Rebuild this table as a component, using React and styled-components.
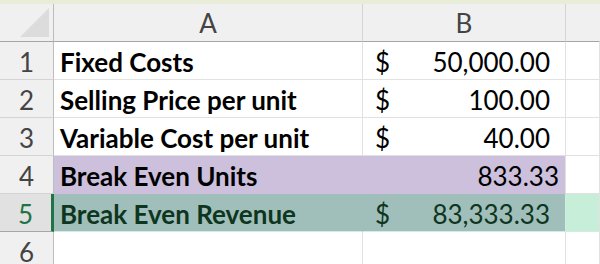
import React from 'react'
import styled, { createGlobalStyle } from 'styled-components'

const GlobalStyle = createGlobalStyle`
  body {
    margin: 0;
    background: #ffffff;
    font-family: Lato, "Open Sans", sans-serif;
  }
`

const Page = styled.div`
  width: 600px;
  height: 264px;
  overflow: hidden;
  background: #ffffff;
`
const TopStrip = styled.div`
  height: 4px;
  background: #e8ecd9;
`
const Sheet = styled.div`
  display: grid;
  grid-template-columns: 54px 309px 203px 1fr;
  grid-template-rows: 38px repeat(6, 38px);
`
const Corner = styled.div`
  position: relative;
  background: #f0f0f0;
  border-right: 1px solid #bdbdbd;
  border-bottom: 1px solid #a6a6a6;
  box-sizing: border-box;
  &::after {
    content: '';
    position: absolute;
    right: 4px;
    bottom: 4px;
    width: 0;
    height: 0;
    border-left: 29px solid transparent;
    border-bottom: 29px solid #dcdcdc;
  }
`
const ColHeader = styled.div`
  display: flex;
  align-items: center;
  justify-content: center;
  padding-top: 1px;
  background: #f0f0f0;
  color: #444444;
  font-size: 26px;
  border-right: 1px solid ${p => (p.$last ? 'transparent' : '#d4d4d4')};
  border-bottom: 1px solid #a6a6a6;
  box-sizing: border-box;
`
const RowHeader = styled.div`
  display: flex;
  align-items: center;
  justify-content: center;
  padding-top: 2px;
  background: ${p => (p.$selected ? '#e1e1e1' : '#f0f0f0')};
  color: ${p => (p.$selected ? '#217346' : '#444444')};
  font-size: 26px;
  border-right: ${p => (p.$selected ? '3px solid #217346' : '1px solid #bdbdbd')};
  border-bottom: 1px solid ${p => (p.$selected ? '#a6a6a6' : '#d4d4d4')};
  box-sizing: border-box;
`
const fills = {
  purple: '#cdc0dc',
  teal: '#a1bfba',
  mint: '#c6eed9',
}
const Cell = styled.div`
  display: flex;
  align-items: center;
  justify-content: ${p => (p.$right ? 'flex-end' : 'space-between')};
  padding: 2px ${p => p.$padRight || 8}px 0 ${p => p.$padLeft || 6}px;
  background: ${p => fills[p.$fill] || '#ffffff'};
  color: ${p => (p.$fill === 'teal' ? '#0e3520' : '#000000')};
  font-size: 26px;
  font-weight: ${p => (p.$bold ? 700 : 400)};
  white-space: nowrap;
  border-right: 1px solid ${p => (p.$fill === 'purple' || p.$fill === 'teal' ? p.$fillBorder || 'transparent' : '#e1e1e1')};
  border-bottom: 1px solid ${p => (p.$fill === 'teal' || p.$fill === 'mint' ? '#d3ece2' : p.$fill === 'purple' ? '#cdc0dc' : '#e1e1e1')};
  box-sizing: border-box;
`
const Amount = styled.span`
  padding-right: 7px;
`

const rows = [
  { n: 1, label: 'Fixed Costs', value: '50,000.00', dollar: true },
  { n: 2, label: 'Selling Price per unit', value: '100.00', dollar: true },
  { n: 3, label: 'Variable Cost per unit', value: '40.00', dollar: true },
  { n: 4, label: 'Break Even Units', value: '833.33', fill: 'purple' },
  { n: 5, label: 'Break Even Revenue', value: '83,333.33', dollar: true, fill: 'teal', selected: true },
]

export default function App() {
  return (
    <Page>
      <GlobalStyle />
      <TopStrip />
      <Sheet>
        <Corner />
        <ColHeader>A</ColHeader>
        <ColHeader>B</ColHeader>
        <ColHeader $last />
        {rows.map(r => (
          <React.Fragment key={r.n}>
            <RowHeader $selected={r.selected}>{r.n}</RowHeader>
            <Cell $bold $fill={r.fill}>{r.label}</Cell>
            {r.dollar ? (
              <Cell $fill={r.fill} $padLeft={12} $padRight={8} $fillBorder="#d3ece2">
                <span>$</span>
                <Amount>{r.value}</Amount>
              </Cell>
            ) : (
              <Cell $right $fill={r.fill} $padRight={6} $fillBorder="#e1e1e1">{r.value}</Cell>
            )}
            <Cell $fill={r.selected ? 'mint' : undefined} />
          </React.Fragment>
        ))}
        <RowHeader>6</RowHeader>
        <Cell />
        <Cell />
        <Cell />
      </Sheet>
    </Page>
  )
}
